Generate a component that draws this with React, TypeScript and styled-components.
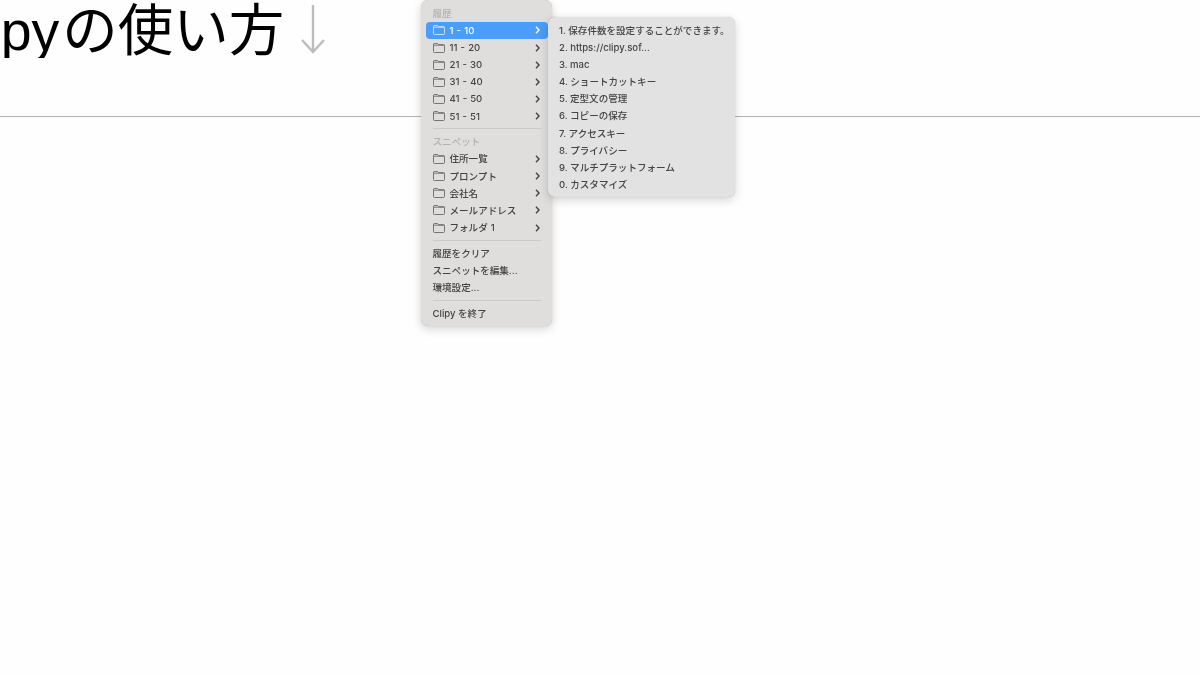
import styled, { createGlobalStyle } from "styled-components";

const historyRows = ["1 - 10", "11 - 20", "21 - 30", "31 - 40", "41 - 50", "51 - 51"];
const snippetRows = ["住所一覧", "プロンプト", "会社名", "メールアドレス", "フォルダ 1"];
const subRows = [
  "1. 保存件数を設定することができます。",
  "2. https://clipy.sof...",
  "3. mac",
  "4. ショートカットキー",
  "5. 定型文の管理",
  "6. コピーの保存",
  "7. アクセスキー",
  "8. プライバシー",
  "9. マルチプラットフォーム",
  "0. カスタマイズ",
];

const FolderIcon = () => (
  <FolderSvg viewBox="0 0 12 10">
    <path d="M.5 2.2V1.3C.5.8.9.5 1.4.5h2.7c.4 0 .6.1.9.4l.8.8h4.8c.5 0 .9.4.9.9v6c0 .5-.4.9-.9.9H1.4c-.5 0-.9-.4-.9-.9V2.2h11" />
  </FolderSvg>
);

const Chevron = () => (
  <ChevronSvg viewBox="0 0 5 8">
    <path d="M1 .8 4 4 1 7.2" />
  </ChevronSvg>
);

function FolderRow({ label, active }: { label: string; active?: boolean }) {
  return (
    <Row $active={active}>
      <FolderIcon />
      <RowText>{label}</RowText>
      <Chevron />
    </Row>
  );
}

function App() {
  return (
    <Page>
      <GlobalStyle />
      <Header>
        <Title>
          <span>
            Clipy<TitleKana>の使い方</TitleKana>
          </span>
          <DownArrow viewBox="0 0 26 50">
            <path d="M13 1v47M2 36l11 12 11-12" />
          </DownArrow>
        </Title>
      </Header>

      <MainMenu>
        <Label>履歴</Label>
        {historyRows.map((label, i) => (
          <FolderRow key={label} label={label} active={i === 0} />
        ))}
        <Separator />
        <Label>スニペット</Label>
        {snippetRows.map((label) => (
          <FolderRow key={label} label={label} />
        ))}
        <Separator />
        <PlainRow>履歴をクリア</PlainRow>
        <PlainRow>スニペットを編集...</PlainRow>
        <PlainRow>環境設定...</PlainRow>
        <Separator />
        <PlainRow>Clipy を終了</PlainRow>
      </MainMenu>

      <SubMenu>
        {subRows.map((label) => (
          <SubRow key={label}>{label}</SubRow>
        ))}
      </SubMenu>
    </Page>
  );
}

const GlobalStyle = createGlobalStyle`
  html, body {
    margin: 0;
    padding: 0;
    background: #fff;
  }
`;

const Page = styled.div`
  position: relative;
  width: 1200px;
  height: 675px;
  overflow: hidden;
  background: #fefefe;
  font-family: "Inter", "Noto Sans CJK JP", sans-serif;
`;

const Header = styled.header`
  height: 116px;
  border-bottom: 1px solid #b4b4b4;
`;

const Title = styled.h1`
  display: flex;
  align-items: flex-start;
  height: 58px;
  margin: 0 0 0 -64px;
  overflow: hidden;
  font-family: "Liberation Sans", "Noto Sans CJK JP", sans-serif;
  font-size: 55.5px;
  font-weight: 400;
  line-height: 62px;
  color: #000;
`;

const TitleKana = styled.span`
  margin-left: 3px;
`;

const DownArrow = styled.svg`
  flex: none;
  width: 26px;
  height: 50px;
  margin: 4px 0 0 16px;
  fill: none;
  stroke: #bcbcbc;
  stroke-width: 2.4;
`;

const Menu = styled.div`
  position: absolute;
  box-sizing: border-box;
  padding: 4.7px 4.5px 4px;
  border-radius: 7px;
  box-shadow: 0 0 1px rgba(0, 0, 0, 0.3), 0 3px 10px rgba(0, 0, 0, 0.17);
  filter: blur(0.35px);
  font-size: 9.55px;
  font-weight: 500;
  line-height: 18px;
  color: #444;
`;

const MainMenu = styled(Menu)`
  left: 421px;
  top: 0;
  width: 131px;
  background: #dfdedc;
`;

const SubMenu = styled(Menu)`
  left: 548px;
  top: 17px;
  width: 187px;
  background: #e2e2e2;
`;

const Label = styled.div`
  height: 17.15px;
  padding-left: 7px;
  color: #b2b2b2;
`;

const Row = styled.div<{ $active?: boolean }>`
  display: flex;
  align-items: center;
  height: 17.15px;
  padding: 0 8px 0 7px;
  border-radius: 4px;
  background: ${(p) => (p.$active ? "#4a9dfb" : "transparent")};
  color: ${(p) => (p.$active ? "#fff" : "#444")};
`;

const RowText = styled.span`
  flex: 1;
  margin: 1px 0 0 5px;
  word-spacing: 0.6px;
`;

const PlainRow = styled.div`
  height: 17.15px;
  padding-left: 7px;
  white-space: nowrap;
`;

const SubRow = styled.div`
  height: 17.15px;
  padding-left: 6.5px;
  white-space: nowrap;
`;

const Separator = styled.div`
  height: 1px;
  margin: 3.8px 7px;
  background: #cbcac8;
`;

const FolderSvg = styled.svg`
  flex: none;
  width: 12px;
  height: 10px;
  fill: none;
  stroke: currentColor;
  stroke-width: 0.8;
  opacity: 0.85;
`;

const ChevronSvg = styled.svg`
  flex: none;
  width: 5px;
  height: 8px;
  fill: none;
  stroke: currentColor;
  stroke-width: 1.4;
`;

export default App;
